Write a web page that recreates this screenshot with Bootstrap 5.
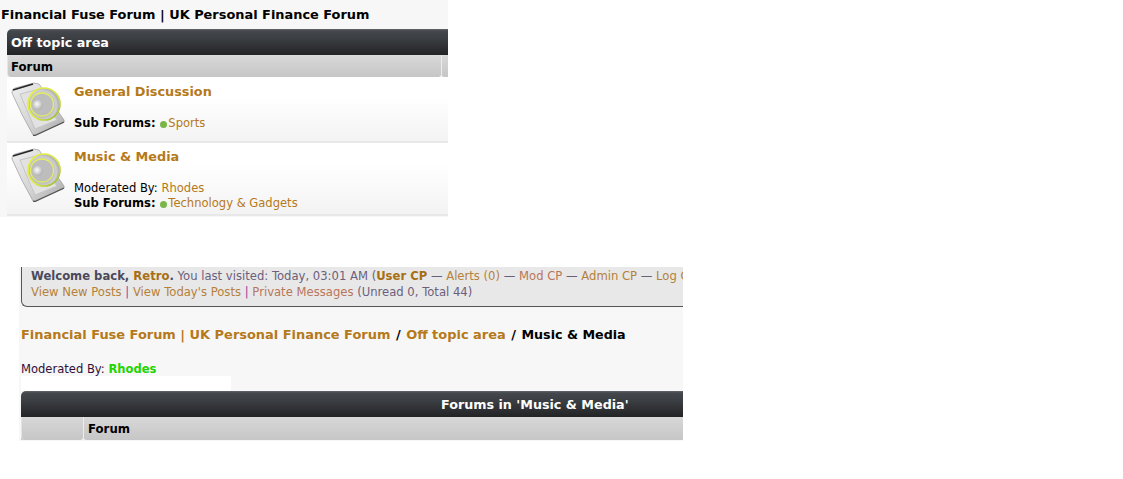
<!DOCTYPE html>
<html lang="en">
<head>
<meta charset="utf-8">
<title>Financial Fuse Forum</title>
<link href="https://cdn.jsdelivr.net/npm/bootstrap@5.3.0/dist/css/bootstrap.min.css" rel="stylesheet">
<style>
html,body{background:#fff;margin:0;height:479px;overflow:hidden}
body{font-family:"DejaVu Sans","Liberation Sans",sans-serif;font-size:11.55px;line-height:15px;color:#000}
a{text-decoration:none;color:#b5791a}
.shot-top{width:448px;height:217px;background:#f7f7f7;overflow:hidden}
.page-title{font-size:12.92px;font-weight:700;line-height:15px;padding:7px 0 7px 1px;color:#000;white-space:nowrap}
.forum-wrap{margin-left:7px}
.bar-dark{height:26px;background:linear-gradient(#62666a 0,#44474b 2px,#3a3d41 40%,#222325 100%);color:#fff;font-size:12.72px;font-weight:700;line-height:27px;border-top-left-radius:5px;white-space:nowrap}
.bar-sub{height:22px;background:linear-gradient(#dadada 0,#d6d6d6 2px,#c6c6c6 100%);font-weight:700;font-size:11.75px;line-height:24px;color:#000;border-left:1px solid #e4e4e4;border-bottom-left-radius:4px}
.sub-cell{border-right:1px solid #ececec;height:22px;padding-left:3px;position:relative}
.sub-cell::after,.bar-first::after{content:"";position:absolute;right:-3px;bottom:0;border:2px solid transparent;border-bottom-color:#ececec;border-left-width:2px;border-right-width:3px;border-top-width:0}
.forum-row{background:linear-gradient(#fff 0,#fff 30%,#f3f3f3 100%);border-bottom:2px solid #e8e8e8}
.row-one{height:66px}
.row-two{height:73px}
.forum-icon{width:67px;flex:none;padding:3px 0 0 4px}
.forum-name{font-size:12.82px;font-weight:700;line-height:15px;display:block;margin-top:7px}
.row-two .forum-name{margin-top:6px}
.forum-meta{color:#000}
.meta-first{margin-top:17px}
.dot-on{display:inline-block;width:7px;height:7px;border-radius:50%;background:#7ab648;margin:0 1px -1px 1px;vertical-align:baseline}
.shot-bottom{width:664px;height:174px;margin:50px 0 0 19px;background:#f7f7f7;overflow:hidden}
.info-box{margin-left:2px;height:40px;background:#e8e8e8;border-left:1px solid #555;border-bottom:1px solid #555;border-bottom-left-radius:6px;padding:1px 0 0 9px;color:#6c5f7c;white-space:nowrap;font-size:11.62px;line-height:16px;overflow:hidden}
.info-box strong{color:#4a4a5c}
.info-box a strong{color:#a66f14}
.info-box a{color:#b5813a}
.link-warm{color:#b8765a!important}
.sep-pur{color:#a040a0}
.crumbs{font-size:12.95px;font-weight:700;line-height:15px;padding:20px 0 0 2px;white-space:nowrap;color:#000}
.crumbs a{color:#b5791a}
.crumb-end{font-size:12.7px}
.slash-gap{padding:0 1px}
.mod-line{padding:20px 0 0 2px;line-height:14px;color:#30103a}
.mod-line a{color:#22d400;font-weight:700}
.white-strip{margin-left:2px;width:210px;height:15px;background:#fff}
.bottom-wrap{margin-left:2px}
.bar-center{padding-left:420px}
.bar-first{width:63px;border-right:1px solid #ececec;height:23px;border-left:1px solid #e4e4e4;border-bottom-left-radius:4px;position:relative}
.bar-sub.bar-low{height:23px;border-left:0;display:flex;border-radius:0}
.tail-gap{width:6px}
</style>
</head>
<body>
<svg width="0" height="0" class="d-block" aria-hidden="true">
<defs>
<linearGradient id="cs" x1="0" y1="0" x2="1" y2="1"><stop offset="0" stop-color="#f0f0f0"/><stop offset=".6" stop-color="#d2d2d2"/><stop offset="1" stop-color="#a8a8a8"/></linearGradient>
<linearGradient id="ringg" x1="0" y1="0" x2="1" y2="1"><stop offset="0" stop-color="#e8f040"/><stop offset=".6" stop-color="#d8e84a"/><stop offset="1" stop-color="#8fb030"/></linearGradient>
<radialGradient id="cone" cx=".42" cy=".55" r=".62"><stop offset="0" stop-color="#e8e8e8"/><stop offset=".35" stop-color="#a8a8a8"/><stop offset=".75" stop-color="#cfcfcf"/><stop offset="1" stop-color="#9a9a9a"/></radialGradient>
<radialGradient id="capg" cx=".4" cy=".4" r=".7"><stop offset="0" stop-color="#fafafa"/><stop offset="1" stop-color="#a6a6a6"/></radialGradient>
<symbol id="spk" viewBox="0 0 56 56">
<path d="M1 12 Q1 9 4 8 L23 3 L28 4 L53 40 Q54 42 52 43 L24 55 L22 55 Q10 34 1 13Z" fill="url(#cs)" stroke="#9a9a9a" stroke-width=".7"/>
<path d="M2 10 L22 4" fill="none" stroke="#262626" stroke-width="1.6"/>
<path d="M22 55.5 L24 55.5 L53 42" fill="none" stroke="#555" stroke-width="1.3"/>
<path d="M9 14 L25 10 L46 40 L24 49Z" fill="#e2e2e2" stroke="#bfbfbf" stroke-width=".8"/>
<circle cx="33" cy="24" r="16" fill="url(#cone)" stroke="url(#ringg)" stroke-width="1.7"/>
<circle cx="31" cy="24.5" r="11.5" fill="#bdbdbd" stroke="#e4ee60" stroke-width="1.3"/>
<circle cx="27" cy="25" r="5" fill="url(#capg)"/>
</symbol>
</defs>
</svg>
<section class="shot-top">
<div class="page-title">Financial Fuse Forum | UK Personal Finance Forum</div>
<div class="forum-wrap">
<div class="bar-dark ps-1">Off topic area</div>
<div class="bar-sub d-flex">
<div class="sub-cell flex-grow-1">Forum</div>
<div class="tail-gap"></div>
</div>
<div class="forum-row row-one d-flex">
<div class="forum-icon"><svg width="56" height="56"><use href="#spk"/></svg></div>
<div>
<a class="forum-name" href="#">General Discussion</a>
<div class="forum-meta meta-first"><strong>Sub Forums:</strong> <span class="dot-on"></span><a href="#">Sports</a></div>
</div>
</div>
<div class="forum-row row-two d-flex">
<div class="forum-icon"><svg width="56" height="56"><use href="#spk"/></svg></div>
<div>
<a class="forum-name" href="#">Music &amp; Media</a>
<div class="forum-meta meta-first">Moderated By: <a href="#">Rhodes</a></div>
<div class="forum-meta"><strong>Sub Forums:</strong> <span class="dot-on"></span><a href="#">Technology &amp; Gadgets</a></div>
</div>
</div>
</div>
</section>
<section class="shot-bottom">
<div class="info-box">
<div><strong>Welcome back, </strong><a href="#"><strong>Retro</strong></a><strong>.</strong> You last visited: Today, 03:01 AM (<a href="#"><strong>User CP</strong></a> — <a href="#">Alerts (0)</a> — <a class="link-warm" href="#">Mod CP</a> — <a href="#">Admin CP</a> — <a href="#">Log Out</a></div>
<div><a href="#">View New Posts</a> <span class="sep-pur">|</span> <a href="#">View Today's Posts</a> <span class="sep-pur">|</span> <a class="link-warm" href="#">Private Messages</a> (Unread 0, Total 44)</div>
</div>
<div class="crumbs"><a href="#">Financial Fuse Forum | UK Personal Finance Forum</a> <span class="slash-gap">/</span> <a href="#">Off topic area</a> <span class="slash-gap">/</span> <span class="crumb-end">Music &amp; Media</span></div>
<div class="mod-line">Moderated By: <a href="#">Rhodes</a></div>
<div class="white-strip"></div>
<div class="bottom-wrap">
<div class="bar-dark bar-center">Forums in 'Music &amp; Media'</div>
<div class="bar-sub bar-low"><div class="bar-first"></div><div class="ps-1">Forum</div></div>
</div>
</section>
</body>
</html>
